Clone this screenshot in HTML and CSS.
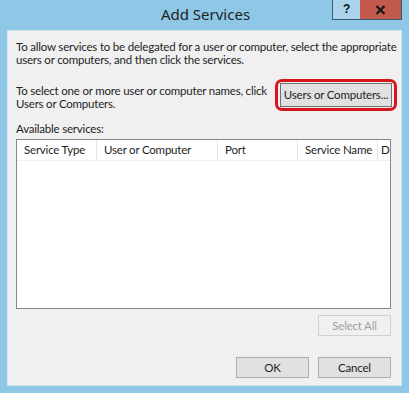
FILE: index.html
```html
<!DOCTYPE html>
<html>
<head>
<meta charset="utf-8">
<link rel="stylesheet" href="styles.css">
</head>
<body>
<div class="window">
  <div class="titlebar">
    <div class="title">Add Services</div>
    <div class="controls">
      <div class="btn-help">?</div>
      <div class="btn-close">
        <svg width="11" height="10" viewBox="0 0 11 10"><path d="M1.5 1 L9.5 9 M9.5 1 L1.5 9" stroke="#1a1a1a" stroke-width="2.4" fill="none"/></svg>
      </div>
    </div>
  </div>
  <div class="client">
    <p class="intro">To allow services to be delegated for a user or computer, select the appropriate<br>users or computers, and then click the services.</p>
    <div class="select-row">
      <p class="select-text">To select one or more user or computer names, click<br>Users or Computers.</p>
      <div class="highlight">
        <div class="button users">Users or Computers...</div>
      </div>
    </div>
    <div class="label">Available services:</div>
    <div class="list">
      <div class="header">
        <div class="col c1">Service Type</div>
        <div class="col c2">User or Computer</div>
        <div class="col c3">Port</div>
        <div class="col c4">Service Name</div>
        <div class="col c5">D</div>
      </div>
    </div>
    <div class="row-right selectall-row">
      <div class="button disabled">Select All</div>
    </div>
    <div class="row-right actions">
      <div class="button">OK</div>
      <div class="button">Cancel</div>
    </div>
  </div>
</div>
</body>
</html>
```
FILE: styles.css
```css
html, body {
  margin: 0;
  padding: 0;
}
body {
  width: 409px;
  height: 393px;
  overflow: hidden;
  font-family: "Lato", "Liberation Sans", sans-serif;
  font-size: 11.5px;
  letter-spacing: -0.2px;
  color: #1e1e1e;
}
.window {
  width: 409px;
  height: 393px;
  background: #8ec8e6;
  display: flex;
  flex-direction: column;
  box-sizing: border-box;
}
.titlebar {
  height: 30px;
  position: relative;
  flex: none;
}
.title {
  text-align: center;
  font-family: "Noto Sans", sans-serif;
  font-size: 15px;
  letter-spacing: 0;
  line-height: 28px;
  color: #222;
  padding-left: 2px;
}
.controls {
  position: absolute;
  top: 0;
  right: 7px;
  display: flex;
}
.btn-help {
  width: 28px;
  height: 20px;
  border: 1px solid #3c5a6e;
  border-top: none;
  border-right: none;
  box-sizing: border-box;
  background: #a9d4ec;
  text-align: center;
  font-family: "Liberation Sans", sans-serif;
  font-weight: bold;
  font-size: 12px;
  line-height: 19px;
  color: #111;
}
.btn-close {
  width: 42px;
  height: 20px;
  background: #c4594d;
  border: 1px solid #3c5a6e;
  border-top: none;
  border-left: none;
  box-sizing: border-box;
  display: flex;
  align-items: center;
  justify-content: center;
}
.client {
  margin: 0 7px 7px 7px;
  flex: 1;
  background: #f0f0f0;
  border: 1px solid #d3e6f0;
  padding: 9px 10px 0 8px;
  display: flex;
  flex-direction: column;
  overflow: hidden;
}
p {
  margin: 0;
  line-height: 13px;
  white-space: nowrap;
}
.select-row {
  display: flex;
  align-items: flex-start;
  margin-top: 18px;
  justify-content: space-between;
}
.highlight {
  margin-top: -5px;
  margin-right: -6px;
  border: 3px solid #d8141c;
  border-radius: 7px;
  padding: 1px 2px;
}
.button {
  height: 21px;
  box-sizing: border-box;
  border: 1px solid #adadad;
  background: #e1e1e1;
  text-align: center;
  line-height: 19px;
  width: 73px;
  white-space: nowrap;
}
.button.users {
  width: 112px;
  height: 24px;
  line-height: 22px;
  border-color: #707070;
}
.label {
  margin-top: 11px;
  line-height: 14px;
}
.list {
  margin-top: 3px;
  height: 170px;
  box-sizing: border-box;
  flex: none;
  background: #fff;
  border: 1px solid #828790;
  overflow: hidden;
}
.header {
  display: flex;
  height: 20px;
  border-bottom: 1px solid #f0f0f0;
}
.col {
  box-sizing: border-box;
  padding-left: 7px;
  line-height: 20px;
  border-right: 1px solid #e5e5e5;
  white-space: nowrap;
  overflow: hidden;
  flex: none;
}
.c1 { width: 80px; }
.c2 { width: 121px; }
.c3 { width: 80px; }
.c4 { width: 80px; }
.c5 { flex: 1; padding-left: 3px; border-right: none; }
.row-right {
  display: flex;
  justify-content: flex-end;
  gap: 9px;
}
.selectall-row {
  margin-top: 6px;
}
.button.disabled {
  background: #f0f0f0;
  border-color: #d0d0d0;
  color: #a0a0a0;
}
.actions {
  margin-top: 21px;
}
```
